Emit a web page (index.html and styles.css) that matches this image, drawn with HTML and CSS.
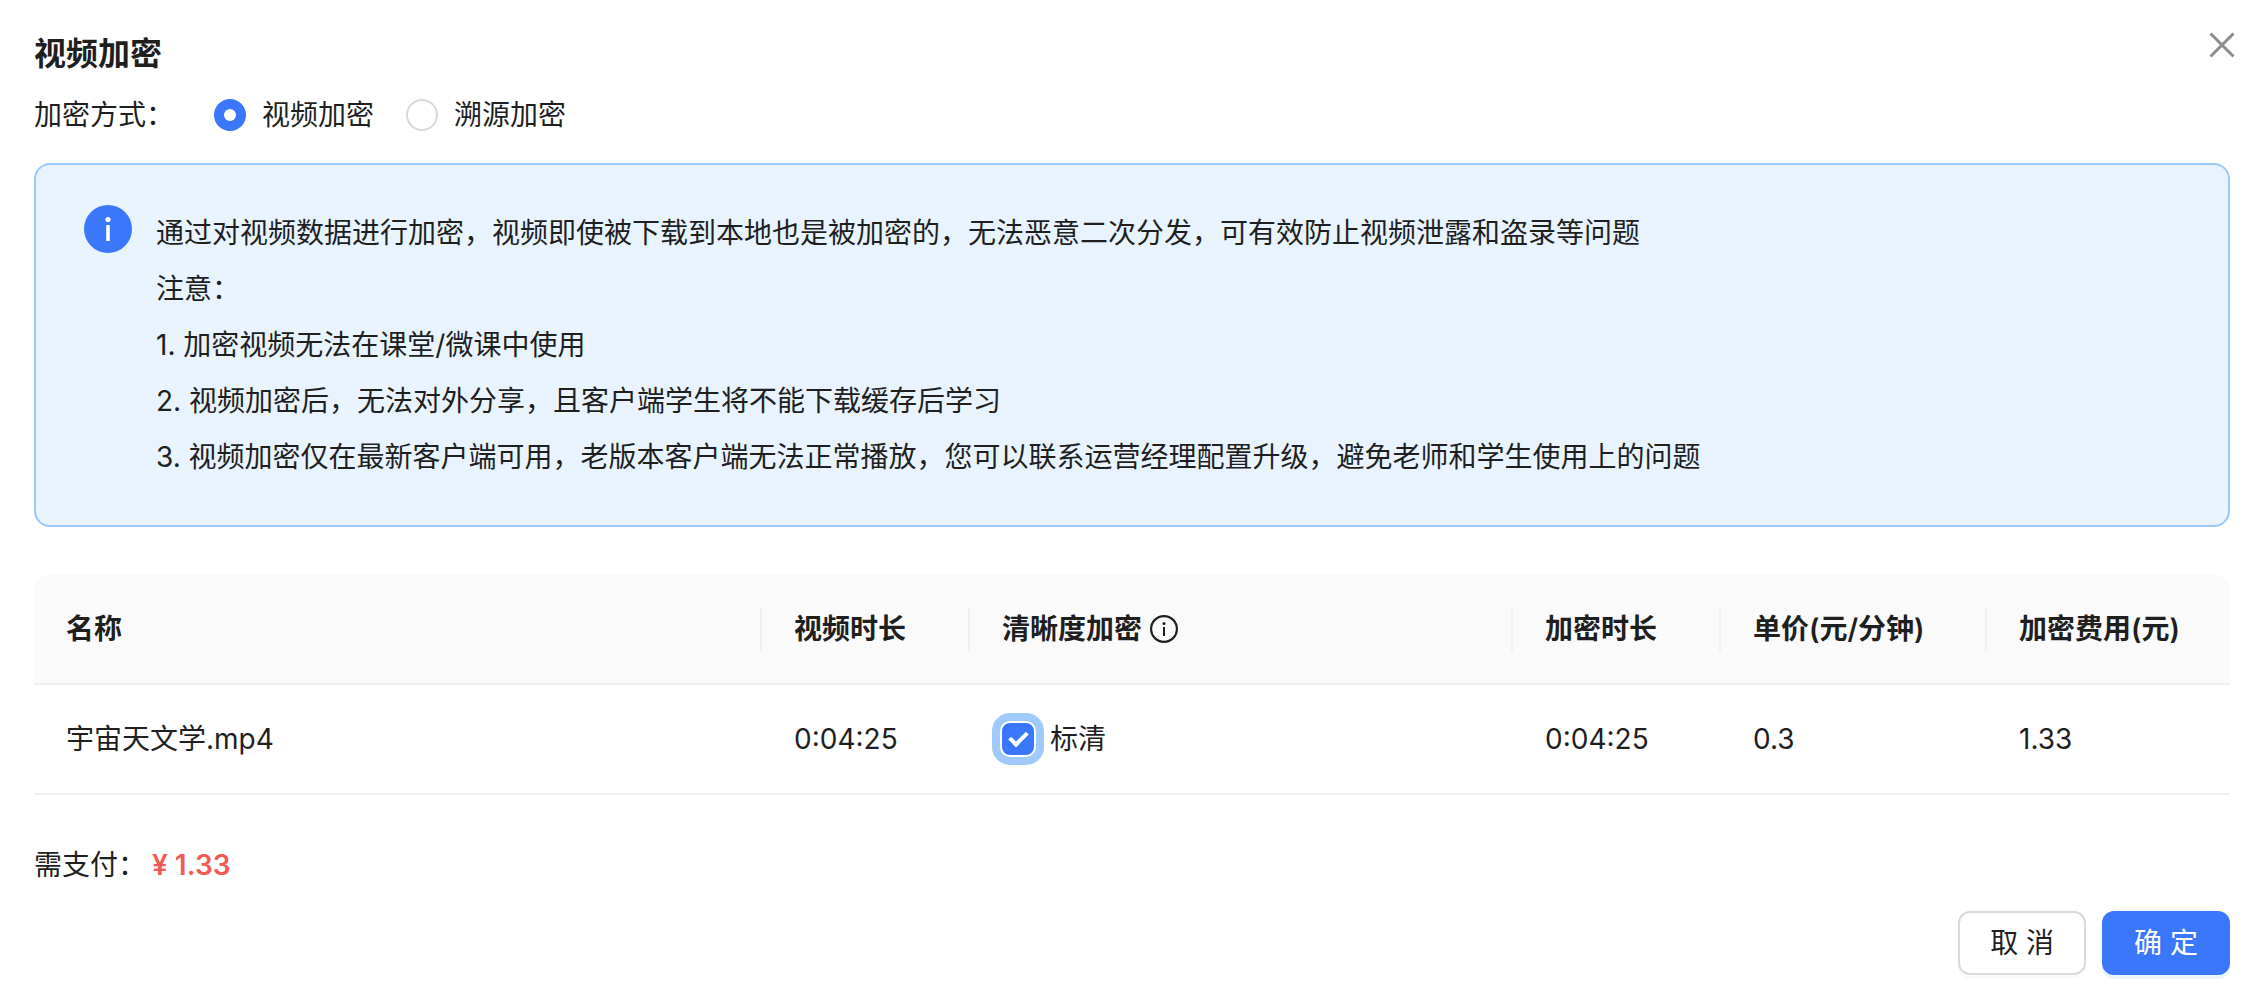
FILE: index.html
```
<!DOCTYPE html>
<html lang="zh-CN">
<head>
  <meta charset="UTF-8" />
  <meta name="viewport" content="width=device-width, initial-scale=1.0" />
  <title>视频加密</title>
  <link rel="stylesheet" href="styles.css">
</head>
<body>
  <div class="modal">
    <header class="modal-header">
      <h1>视频加密</h1>
      <button type="button" class="close-btn" aria-label="关闭">
        <svg width="26" height="26" viewBox="0 0 26 26" fill="none" stroke="currentColor" stroke-width="3">
          <path d="M1.5 1.5L24.5 24.5M24.5 1.5L1.5 24.5" />
        </svg>
      </button>
    </header>

    <main class="modal-body">
      <div class="mode-row" role="radiogroup" aria-labelledby="modeLabel">
        <span id="modeLabel" class="mode-label">加密方式：</span>
        <label class="option"><input type="radio" name="mode" value="video" checked>视频加密</label>
        <label class="option"><input type="radio" name="mode" value="trace">溯源加密</label>
      </div>

      <div class="alert">
        <svg class="alert-icon" width="48" height="48" viewBox="0 0 48 48">
          <circle cx="24" cy="24" r="24" fill="#3a77fa" />
          <circle cx="24" cy="14.5" r="2.6" fill="#fff" />
          <rect x="22.2" y="20" width="3.6" height="16" rx="0.6" fill="#fff" />
        </svg>
        <div class="alert-text">
          <p>通过对视频数据进行加密，视频即使被下载到本地也是被加密的，无法恶意二次分发，可有效防止视频泄露和盗录等问题</p>
          <p>注意：</p>
          <p>1. 加密视频无法在课堂/微课中使用</p>
          <p>2. 视频加密后，无法对外分享，且客户端学生将不能下载缓存后学习</p>
          <p>3. 视频加密仅在最新客户端可用，老版本客户端无法正常播放，您可以联系运营经理配置升级，避免老师和学生使用上的问题</p>
        </div>
      </div>

      <table class="price-table">
        <colgroup>
          <col>
          <col class="col-time">
          <col class="col-quality">
          <col class="col-time">
          <col class="col-price">
          <col class="col-cost">
        </colgroup>
        <thead>
          <tr>
            <th>名称</th>
            <th>视频时长</th>
            <th>
              <span class="th-tip">清晰度加密
                <svg width="28" height="28" viewBox="0 0 28 28">
                  <circle cx="14" cy="14" r="12.9" fill="none" stroke="currentColor" stroke-width="2.2" />
                  <circle cx="14" cy="8.6" r="1.5" fill="currentColor" />
                  <rect x="13" y="12" width="2" height="9" fill="currentColor" />
                </svg>
              </span>
            </th>
            <th>加密时长</th>
            <th>单价(元/分钟)</th>
            <th>加密费用(元)</th>
          </tr>
        </thead>
        <tbody>
          <tr>
            <td>宇宙天文学.mp4</td>
            <td>0:04:25</td>
            <td><label class="option"><input type="checkbox" checked>标清</label></td>
            <td>0:04:25</td>
            <td>0.3</td>
            <td>1.33</td>
          </tr>
        </tbody>
      </table>

      <p class="pay">需支付：<strong>¥ 1.33</strong></p>
    </main>

    <footer class="modal-footer">
      <button type="button" class="btn">取 消</button>
      <button type="button" class="btn btn-primary">确 定</button>
    </footer>
  </div>
</body>
</html>
```
FILE: styles.css
```
*,
*::before {
  box-sizing: border-box;
}

body {
  margin: 0;
  background: #fff;
  color: #1f1f1f;
  font-family: Inter, "Noto Sans CJK SC", sans-serif;
  font-size: 28px;
  line-height: 44px;
}

h1, p {
  margin: 0;
}

button {
  font: inherit;
  cursor: pointer;
}

svg {
  display: block;
  flex: none;
}

/* Header */
.modal-header {
  display: flex;
  justify-content: space-between;
  align-items: flex-start;
  padding: 29px 23px 0 34px;
}

.modal-header h1 {
  font-size: 32px;
  line-height: 50px;
  font-weight: 600;
}

.close-btn {
  display: flex;
  align-items: center;
  height: 32px;
  padding: 0;
  border: none;
  background: none;
  color: #8c8c8c;
}

.modal-body {
  padding: 14px 28px 0 34px;
}

/* Radio + checkbox */
.mode-row {
  display: flex;
  align-items: center;
  gap: 32px;
}

.mode-label {
  margin-right: 8px;
}

.option {
  display: flex;
  align-items: center;
  gap: 16px;
  cursor: pointer;
}

.option input {
  appearance: none;
  flex: none;
  display: grid;
  place-items: center;
  width: 32px;
  height: 32px;
  margin: 0;
  border: 2px solid #d9d9d9;
  background: #fff;
}

.option input[type="radio"] {
  border-radius: 50%;
}

.option input[type="checkbox"] {
  border-radius: 8px;
}

.option input:checked {
  border-color: #3a77fa;
  background: #3a77fa;
}

.option input[type="radio"]:checked::before {
  content: "";
  width: 12px;
  height: 12px;
  border-radius: 50%;
  background: #fff;
}

.option input[type="checkbox"]:checked {
  outline: 8px solid #a0c9fc;
  outline-offset: 2px;
}

.option input[type="checkbox"]:checked::before {
  content: "";
  width: 11px;
  height: 18px;
  border: solid #fff;
  border-width: 0 4px 4px 0;
  transform: translateY(-2px) rotate(45deg);
}

/* Notice */
.alert {
  display: flex;
  gap: 24px;
  margin-top: 26px;
  padding: 40px 48px;
  border: 2px solid #9bc7fd;
  border-radius: 16px;
  background: #e8f3fe;
}

.alert-text {
  line-height: 56px;
}

/* Table */
.price-table {
  width: 100%;
  margin-top: 48px;
  table-layout: fixed;
  border-collapse: separate;
  border-spacing: 0;
}

.col-time {
  width: 208px;
}

.col-quality {
  width: 543px;
}

.col-price {
  width: 266px;
}

.col-cost {
  width: 243px;
}

.price-table th,
.price-table td {
  padding: 32px 0 32px 32px;
  border-bottom: 2px solid #f0f0f0;
  text-align: left;
  white-space: nowrap;
}

/* short divider between header cells */
.price-table th {
  background: linear-gradient(#f0f0f0, #f0f0f0) right center / 2px 44px no-repeat #fafafa;
  font-weight: 600;
}

.price-table th:first-child {
  border-top-left-radius: 16px;
}

.price-table th:last-child {
  border-top-right-radius: 16px;
  background: #fafafa;
}

.th-tip {
  display: flex;
  align-items: center;
  gap: 8px;
}

/* Total */
.pay {
  margin-top: 48px;
}

.pay strong {
  margin-left: 6px;
  color: #f05b56;
  font-weight: 600;
}

/* Footer */
.modal-footer {
  display: flex;
  justify-content: flex-end;
  gap: 16px;
  padding: 24px 28px 16px 34px;
}

.btn {
  height: 64px;
  padding: 0 30px;
  border: 2px solid #d9d9d9;
  border-radius: 12px;
  background: #fff;
  color: #1f1f1f;
  box-shadow: 0 4px 0 rgba(0, 0, 0, 0.02);
}

.btn-primary {
  border-color: #3a77fa;
  background: #3a77fa;
  color: #fff;
  box-shadow: 0 4px 0 #e8f3fe;
}
```
